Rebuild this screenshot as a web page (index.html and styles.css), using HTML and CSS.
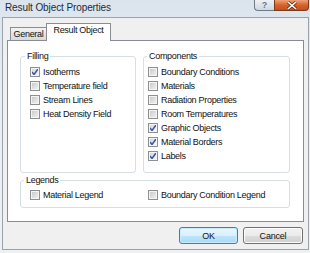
FILE: index.html
```html
<!DOCTYPE html>
<html lang="en">
<head>
    <meta charset="UTF-8">
    <title>Result Object Properties</title>
    <link rel="stylesheet" href="styles.css">
</head>
<body>

<div class="window">
    <div class="titlebar">
        <span class="title">Result Object Properties</span>
        <div class="caption-btns">
            <span class="cap help">?</span>
            <span class="cap close">
                <svg width="12" height="9" viewBox="0 0 12 9">
                    <path d="M2 1 L10 8 M10 1 L2 8" stroke="#6b2a12" stroke-width="3" fill="none"/>
                    <path d="M2 1 L10 8 M10 1 L2 8" stroke="#fff" stroke-width="1.6" fill="none"/>
                </svg>
            </span>
        </div>
    </div>

    <div class="client">
        <div class="tabs">
            <div class="tab">General</div>
            <div class="tab active">Result Object</div>
        </div>

        <div class="panel">
            <div class="group-row">
                <fieldset class="group filling">
                    <legend>Filling</legend>
                    <label class="check"><span class="box on"></span>Isotherms</label>
                    <label class="check"><span class="box"></span>Temperature field</label>
                    <label class="check"><span class="box"></span>Stream Lines</label>
                    <label class="check"><span class="box"></span>Heat Density Field</label>
                </fieldset>

                <fieldset class="group components">
                    <legend>Components</legend>
                    <label class="check"><span class="box"></span>Boundary Conditions</label>
                    <label class="check"><span class="box"></span>Materials</label>
                    <label class="check"><span class="box"></span>Radiation Properties</label>
                    <label class="check"><span class="box"></span>Room Temperatures</label>
                    <label class="check"><span class="box on"></span>Graphic Objects</label>
                    <label class="check"><span class="box on"></span>Material Borders</label>
                    <label class="check"><span class="box on"></span>Labels</label>
                </fieldset>
            </div>

            <fieldset class="group legends">
                <legend>Legends</legend>
                <label class="check"><span class="box"></span>Material Legend</label>
                <label class="check"><span class="box"></span>Boundary Condition Legend</label>
            </fieldset>
        </div>

        <div class="buttons">
            <button type="button" class="btn default">OK</button>
            <button type="button" class="btn">Cancel</button>
        </div>
    </div>
</div>

</body>
</html>
```

FILE: styles.css
```css
body {
    margin: 0;
    width: 310px;
    height: 253px;
    overflow: hidden;
    font-family: 'Liberation Sans', Arial, sans-serif;
    font-size: 9px;
    letter-spacing: -0.3px;
    color: #111;
    background: linear-gradient(#dbe4ed, #e9eef3 40%, #eef1f4);
}

.titlebar {
    display: flex;
    align-items: flex-start;
    height: 17px;
    padding-left: 5px;
}

.title {
    font-size: 10px;
    letter-spacing: -0.1px;
    line-height: 16px;
    color: #1e2a36;
}

.caption-btns {
    display: flex;
    margin-left: auto;
    margin-right: 1px;
}

.cap {
    height: 11px;
    display: flex;
    align-items: center;
    justify-content: center;
    box-sizing: border-box;
    border: 1px solid #6e7a86;
    border-top: none;
}

.help {
    width: 20px;
    border-right: none;
    border-bottom-left-radius: 4px;
    background: linear-gradient(#eef2f5, #cfd7df);
    color: #6a6f75;
    font-size: 9px;
    font-weight: bold;
    letter-spacing: 0;
    text-shadow: 0 0 1px #fff;
}

.close {
    width: 35px;
    border-color: #7a3a1c;
    border-bottom-right-radius: 4px;
    background: linear-gradient(#eca37a, #d8622a 50%, #c4501a);
}

.client {
    margin: 0 1px 0 2px;
    padding: 5px 0;
    border: 1px solid #9aa3ad;
    background-color: #f0f0f0;
}

.tabs {
    display: flex;
    align-items: flex-end;
    height: 17px;
    padding-left: 7px;
    position: relative;
    z-index: 1;
}

.tab {
    box-sizing: border-box;
    height: 13px;
    width: 37px;
    line-height: 12px;
    text-align: center;
    border: 1px solid #898c95;
    border-bottom: none;
    background: linear-gradient(#f4f4f4, #e4e4e4 50%, #d9d9d9);
}

.tab.active {
    height: 18px;
    width: 65px;
    margin-left: -1px;
    margin-bottom: -1px;
    line-height: 13px;
    background: #fff;
}

.panel {
    box-sizing: border-box;
    height: 182px;
    margin: 0 4px;
    padding: 10px 13px 0 12px;
    border: 1px solid #898c95;
    background: #fff;
}

.group-row {
    display: flex;
    gap: 7px;
}

.group {
    margin: 0;
    min-width: 0;
    box-sizing: border-box;
    border: 1px solid #d5dfe5;
    border-radius: 3px;
}

.group legend {
    padding: 0 2px;
    line-height: 11px;
}

.filling {
    width: 116px;
    height: 122px;
    padding: 3px 0 0 9px;
}

.filling legend {
    margin-left: -5px;
}

.components {
    width: 147px;
    height: 122px;
    padding: 3px 0 0 4px;
}

.components legend {
    margin-left: -1px;
}

.legends {
    display: grid;
    grid-template-columns: 118px 1fr;
    width: 270px;
    height: 33px;
    margin-top: 2px;
    padding: 2px 0 0 9px;
}

.legends legend {
    margin-left: -6px;
}

.check {
    display: flex;
    align-items: center;
    height: 14px;
    white-space: nowrap;
}

.box {
    width: 10px;
    height: 10px;
    box-sizing: border-box;
    margin-right: 3px;
    flex-shrink: 0;
    border: 1px solid #8e8f8f;
    background: linear-gradient(135deg, #c4c4c4, #e2e2e2 60%, #f2f2f2);
    box-shadow: inset 0 0 0 1px #f4f4f4;
}

.box.on {
    background-color: #f4f4f4;
    background-image: url("data:image/svg+xml,%3Csvg xmlns='http://www.w3.org/2000/svg' width='8' height='8' viewBox='0 0 8 8'%3E%3Cpath d='M1 4 L3 6.5 L7 1' stroke='%233b55a3' stroke-width='1.5' fill='none'/%3E%3C/svg%3E"), linear-gradient(135deg, #d0d0d0, #ececec 60%, #f8f8f8);
    background-position: center;
    background-repeat: no-repeat;
}

.buttons {
    display: flex;
    justify-content: flex-end;
    gap: 5px;
    margin-top: 5px;
    padding-right: 5px;
}

.btn {
    height: 17px;
    width: 60px;
    padding: 0;
    font-family: inherit;
    font-size: 9px;
    letter-spacing: -0.2px;
    color: #111;
    border: 1px solid #707070;
    border-radius: 3px;
    background: linear-gradient(#f2f2f2, #ebebeb 50%, #dddddd 51%, #cfcfcf);
    box-shadow: inset 0 0 0 1px #fcfcfc;
}

.btn.default {
    width: 59px;
    border-color: #3c7fb1;
    background: linear-gradient(#eaf6fd, #d9f0fc 50%, #bee6fd 51%, #a7d9f5);
    box-shadow: inset 0 0 0 1px #c8ecfb;
}
```
